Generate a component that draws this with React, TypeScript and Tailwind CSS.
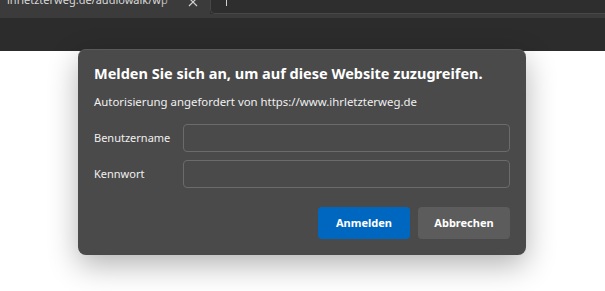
import React from "react";

export default function App() {
  return (
    <div className="relative w-[605px] h-[291px] overflow-hidden bg-white font-['Noto_Sans',sans-serif]">
      {/* Browser chrome */}
      <div className="flex flex-col">
        <div className="flex h-[14px] bg-[#2e2e2e]">
          <div className="relative w-[210px] h-full bg-[#3b3b3b] overflow-hidden">
            <span className="absolute left-[7px] top-[-8px] text-[11px] leading-[16px] text-[#d8d8d8] whitespace-nowrap">
              ihrletzterweg.de/audiowalk/wp
            </span>
            <div className="absolute left-[160px] top-0 w-[22px] h-full bg-gradient-to-r from-transparent to-[#3b3b3b]" />
            <svg className="absolute left-[188px] top-[-3px]" width="10" height="10" viewBox="0 0 10 10">
              <path d="M1 1 L9 9 M9 1 L1 9" stroke="#d0d0d0" strokeWidth="1.2" />
            </svg>
          </div>
          <div className="relative flex-1 h-full border-l border-b border-[#474747] rounded-bl-[5px] bg-[#2e2e2e]">
            <div className="absolute left-[15px] top-0 w-px h-[6px] bg-[#d0d0d0]" />
          </div>
        </div>
        <div className="h-[4px] bg-[#3b3b3b]" />
        <div className="h-[33px] bg-[#2c2c2c]" />
      </div>

      {/* Auth dialog */}
      <div className="absolute left-[78px] top-[49px] w-[448px] h-[206px] rounded-[8px] bg-[#4a4a4a] border-t border-[#5a5a5a] shadow-[0_10px_30px_rgba(0,0,0,0.3)] px-4 pt-[13px] pb-4 flex flex-col">
        <div className="text-[14.5px] leading-[20px] font-bold text-white">
          Melden Sie sich an, um auf diese Website zuzugreifen.
        </div>
        <div className="mt-[11px] text-[11.4px] leading-[16px] text-[#f0f0f0]">
          Autorisierung angefordert von https://www.ihrletzterweg.de
        </div>
        <div className="mt-[14px] flex flex-col gap-2">
          <div className="flex items-center">
            <div className="w-[89px] text-[11px] text-[#f0f0f0]">Benutzername</div>
            <div className="flex-1 h-[28px] rounded-[4px] border border-[#6b6b6b] bg-[#4a4a4a]" />
          </div>
          <div className="flex items-center">
            <div className="w-[89px] text-[11px] text-[#f0f0f0]">Kennwort</div>
            <div className="flex-1 h-[28px] rounded-[4px] border border-[#6b6b6b] bg-[#4a4a4a]" />
          </div>
        </div>
        <div className="mt-auto flex justify-end gap-2">
          <button className="w-[92px] h-[32px] rounded-[4px] bg-[#0067c0] text-white text-[11px] font-bold">
            Anmelden
          </button>
          <button className="w-[92px] h-[32px] rounded-[4px] bg-[#5c5c5c] text-white text-[11px] font-bold">
            Abbrechen
          </button>
        </div>
      </div>
    </div>
  );
}
